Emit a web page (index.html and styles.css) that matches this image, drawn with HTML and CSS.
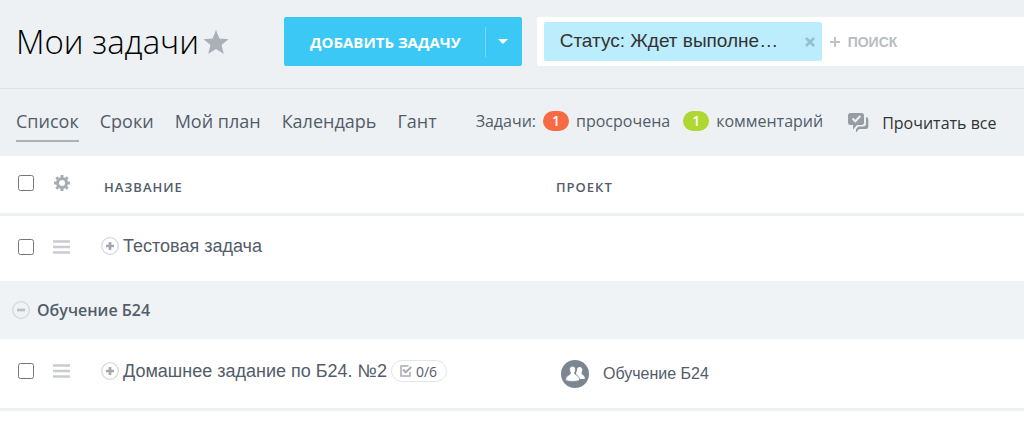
FILE: index.html
```html
<!DOCTYPE html>
<html lang="ru">
<head>
    <meta charset="UTF-8">
    <meta name="viewport" content="width=device-width, initial-scale=1.0">
    <title>Мои задачи</title>
    <link rel="stylesheet" href="styles.css">
</head>
<body>
    <header class="header">
        <div class="title">
            <h1>Мои задачи</h1>
            <button class="icon-btn" aria-label="В избранное">
                <svg width="26" height="24" viewBox="0 0 26 24"><path fill="#a9b0b8" d="M13 0l3.4 8.6 9.1.6-7 5.7 2.3 9.1L13 19l-7.800 5 2.300-9.100-7-5.700 9.100-.6z"/></svg>
            </button>
        </div>
        <div class="add">
            <button class="add-btn">ДОБАВИТЬ ЗАДАЧУ</button>
            <button class="add-more" aria-label="Ещё">
                <svg width="10" height="6" viewBox="0 0 10 6"><path fill="#fff" d="M0 0h10L5 5z"/></svg>
            </button>
        </div>
        <div class="search">
            <div class="filter">
                <span class="filter-text">Статус: Ждет выполне…</span>
                <button class="icon-btn" aria-label="Убрать фильтр">
                    <svg width="10" height="10" viewBox="0 0 10 10"><path stroke="#94c0cf" stroke-width="2.600" d="M1 1l8 8M9 1L1 9"/></svg>
                </button>
            </div>
            <svg class="plus" width="10" height="10" viewBox="0 0 10 10"><path stroke="#bfc3c7" stroke-width="2" d="M5 0v10M0 5h10"/></svg>
            <input class="search-input" type="text" placeholder="ПОИСК" aria-label="Поиск">
        </div>
    </header>

    <div class="toolbar">
        <nav class="tabs">
            <a class="tab active" href="#">Список</a>
            <a class="tab" href="#">Сроки</a>
            <a class="tab" href="#">Мой план</a>
            <a class="tab" href="#">Календарь</a>
            <a class="tab" href="#">Гант</a>
        </nav>
        <div class="counters">
            <span>Задачи:</span>
            <a class="counter" href="#"><span class="badge red">1</span>просрочена</a>
            <a class="counter green-counter" href="#"><span class="badge green">1</span>комментарий</a>
        </div>
        <button class="read-all">
            <svg width="21" height="20" viewBox="0 0 21 20">
                <path fill="#959ca4" d="M2.500 0h11Q16 0 16 2.500v7Q16 12 13.500 12H9l-4 4.500V12H2.500Q0 12 0 9.500v-7Q0 0 2.500 0z"/>
                <path fill="#959ca4" d="M18 4q2.300.3 2.300 2.500v7q0 2.500-2.500 2.500H11l-3 3.500V16l2.500-2.500H15q3 0 3-3z"/>
                <path fill="none" stroke="#edf1f4" stroke-width="2" d="M4.500 5.500l2.800 2.800 5-5.300"/>
            </svg>
            Прочитать все
        </button>
    </div>

    <table class="tasks">
        <thead>
            <tr>
                <th class="col-check"><input type="checkbox" aria-label="Выбрать все"></th>
                <th class="col-menu">
                    <button class="icon-btn" aria-label="Настройки">
                        <svg width="18" height="16" viewBox="0 0 18 16">
                            <circle cx="9" cy="8" r="4.500" fill="none" stroke="#a8adb4" stroke-width="3"/>
                            <path stroke="#a8adb4" stroke-width="3" d="M9 0v3M9 13v3M1 8h3M14 8h3M3.300 2.300l2.200 2.200M12.500 11.500l2.200 2.200M14.700 2.300l-2.200 2.200M5.500 11.500l-2.200 2.200"/>
                        </svg>
                    </button>
                </th>
                <th class="col-name">НАЗВАНИЕ</th>
                <th>ПРОЕКТ</th>
            </tr>
        </thead>
        <tbody>
            <tr class="task">
                <td class="col-check"><input type="checkbox" aria-label="Тестовая задача"></td>
                <td class="col-menu">
                    <button class="icon-btn" aria-label="Меню">
                        <svg width="18" height="14" viewBox="0 0 18 14"><path stroke="#c9ccd1" stroke-width="2.400" d="M0 1.500h17M0 7h17M0 12.500h17"/></svg>
                    </button>
                </td>
                <td>
                    <div class="name">
                        <button class="icon-btn" aria-label="Развернуть">
                            <svg width="18" height="18" viewBox="0 0 18 18"><circle cx="9" cy="9" r="8.300" fill="none" stroke="#d5d7da" stroke-width="1.300"/><path stroke="#a2a8af" stroke-width="2.700" d="M9 5v8M5 9h8"/></svg>
                        </button>
                        <a href="#">Тестовая задача</a>
                    </div>
                </td>
                <td></td>
            </tr>
            <tr class="group">
                <td colspan="4">
                    <div class="group-name">
                        <button class="icon-btn" aria-label="Свернуть">
                            <svg width="18" height="18" viewBox="0 0 18 18"><circle cx="9" cy="9" r="8.300" fill="none" stroke="#d3d7da" stroke-width="1.300"/><path stroke="#b9bfc4" stroke-width="2.700" d="M5 9h8"/></svg>
                        </button>
                        <span>Обучение Б24</span>
                    </div>
                </td>
            </tr>
            <tr class="task last">
                <td class="col-check"><input type="checkbox" aria-label="Домашнее задание по Б24. №2"></td>
                <td class="col-menu">
                    <button class="icon-btn" aria-label="Меню">
                        <svg width="18" height="14" viewBox="0 0 18 14"><path stroke="#c9ccd1" stroke-width="2.400" d="M0 1.500h17M0 7h17M0 12.500h17"/></svg>
                    </button>
                </td>
                <td>
                    <div class="name">
                        <button class="icon-btn" aria-label="Развернуть">
                            <svg width="18" height="18" viewBox="0 0 18 18"><circle cx="9" cy="9" r="8.300" fill="none" stroke="#d5d7da" stroke-width="1.300"/><path stroke="#a2a8af" stroke-width="2.700" d="M9 5v8M5 9h8"/></svg>
                        </button>
                        <a href="#">Домашнее задание по Б24. №2</a>
                        <span class="checklist">
                            <svg width="12" height="12" viewBox="0 0 12 12"><path fill="none" stroke="#a8adb4" stroke-width="1.500" d="M8.500 1H1v10h9V7"/><path fill="none" stroke="#a8adb4" stroke-width="2" d="M3 4.500l2.700 2.800L11.300 2"/></svg>
                            0/6
                        </span>
                    </div>
                </td>
                <td class="col-project">
                    <a class="project" href="#">
                        <svg width="28" height="28" viewBox="0 0 28 28">
                            <circle cx="14" cy="14" r="14" fill="#7b8691"/>
                            <path fill="#fff" d="M18.500 7c2 0 3 1.300 2.800 3.300-.1 1.500-.8 2.300-.8 3.200 0 1 3.500 1.500 3.300 5.500H16l-1-6 1-2.500C15.800 8.300 17 7 18.500 7z"/>
                            <path fill="#fff" stroke="#7b8691" stroke-width=".8" d="M11.500 6.200c2.300 0 3.300 1.600 3.100 3.600-.1 1.500-1 2.400-1 3.500 0 1.700 5.200 2 5 7.200-4 1.300-10 1.300-14 0-.2-5.200 4.900-5.500 4.900-7.200 0-1.100-.9-2-1-3.500-.2-2 .8-3.600 3-3.600z"/>
                        </svg>
                        Обучение Б24
                    </a>
                </td>
            </tr>
        </tbody>
    </table>
</body>
</html>
```
FILE: styles.css
```css
* {
    box-sizing: border-box;
}
body {
    margin: 0;
    background-color: #fff;
    font-family: "Open Sans", sans-serif;
    color: #535c69;
}
a {
    color: inherit;
    text-decoration: none;
}
button {
    border: none;
    background: none;
    padding: 0;
    font-family: inherit;
    color: inherit;
    cursor: pointer;
}
svg {
    display: block;
    flex-shrink: 0;
}
.icon-btn {
    display: block;
    flex-shrink: 0;
}
.header {
    display: flex;
    align-items: flex-start;
    padding: 17px 0 22px 16px;
    background-color: #edf1f4;
    border-bottom: 1px solid #dce1e5;
}
.title {
    display: flex;
    align-items: center;
    gap: 4px;
    width: 268px;
    height: 49px;
    flex-shrink: 0;
}
.title h1 {
    margin: 0;
    font-size: 33px;
    font-weight: 300;
    color: #000;
    white-space: nowrap;
}
.add {
    display: flex;
    align-items: center;
    flex-shrink: 0;
    height: 49px;
    margin-right: 15px;
    background-color: #3bc8f5;
    border-radius: 2px;
}
.add-btn {
    padding: 0 24px 0 26px;
    font-size: 15px;
    font-weight: 700;
    color: #fff;
}
.add-more {
    display: flex;
    align-items: center;
    height: 30px;
    padding: 0 14px 0 12px;
    border-left: 1px solid #76d9f8;
}
.search {
    display: flex;
    align-items: center;
    flex: 1;
    min-width: 0;
    height: 49px;
    padding-left: 7px;
    background-color: #fff;
    border-radius: 2px 0 0 2px;
    font-family: "Liberation Sans", Arial, sans-serif;
}
.filter {
    display: flex;
    align-items: center;
    justify-content: space-between;
    width: 278px;
    height: 39px;
    padding: 0 7px 0 16px;
    background-color: #bbedfc;
    border-radius: 2px;
}
.filter-text {
    padding-bottom: 2px;
    font-size: 19px;
    color: #333;
    white-space: nowrap;
}
.plus {
    margin: 0 8px;
}
.search-input {
    flex: 1;
    min-width: 0;
    padding: 0;
    border: none;
    outline: none;
    font-family: inherit;
    font-size: 14px;
    font-weight: 700;
}
.search-input::placeholder {
    color: #b8bcc0;
}
.toolbar {
    display: flex;
    align-items: center;
    height: 67px;
    padding: 0 16px;
    background-color: #edf1f4;
    white-space: nowrap;
}
.tabs {
    display: flex;
    gap: 21px;
    margin-right: 39px;
    font-size: 18px;
}
.tab {
    height: 38px;
    padding-top: 5px;
    line-height: 24px;
}
.tab.active {
    border-bottom: 2px solid #a9b1b9;
}
.counters {
    display: flex;
    align-items: center;
    gap: 7px;
    padding-bottom: 3px;
    font-size: 16px;
}
.counter {
    display: flex;
    align-items: center;
    gap: 7px;
}
.green-counter {
    margin-left: 6px;
}
.badge {
    width: 26px;
    border-radius: 10px;
    font-size: 14px;
    font-weight: 600;
    line-height: 20px;
    text-align: center;
    color: #fff;
}
.red {
    background-color: #f66b43;
}
.green {
    background-color: #aed731;
}
.read-all {
    display: flex;
    align-items: center;
    gap: 13px;
    margin-left: 25px;
    font-size: 16px;
    color: #333;
}
.tasks {
    width: 100%;
    border-spacing: 0;
    table-layout: fixed;
}
.tasks th {
    height: 60px;
    padding: 4px 0 0 4px;
    border-bottom: 3px solid #edf1f4;
    font-size: 13px;
    font-weight: 600;
    letter-spacing: 1px;
    text-align: left;
}
.tasks td {
    height: 65px;
    padding: 0 0 5px;
}
.tasks .col-check {
    width: 53px;
    padding: 0 0 3px 18px;
}
.tasks .col-menu {
    width: 47px;
    padding: 0 0 3px;
}
.tasks .col-name {
    width: 452px;
    padding-left: 4px;
}
.tasks input {
    display: block;
    width: 16px;
    height: 16px;
    margin: 0;
}
.name {
    display: flex;
    align-items: center;
    gap: 4px;
    padding-left: 1px;
    font-family: "Liberation Sans", Arial, sans-serif;
    font-size: 18px;
    white-space: nowrap;
}
.tasks .group td {
    height: 58px;
    padding-bottom: 1px;
    background-color: #eff3f6;
}
.group-name {
    display: flex;
    align-items: center;
    gap: 7px;
    padding-left: 12px;
    font-size: 16px;
    font-weight: 600;
}
.tasks .last td {
    height: 72px;
    padding-bottom: 5px;
    border-bottom: 3px solid #edf1f4;
}
.tasks .last .col-project {
    padding-bottom: 0;
}
.checklist {
    display: flex;
    align-items: center;
    gap: 4px;
    height: 22px;
    padding: 0 9px 0 8px;
    border: 1px solid #e3e6e9;
    border-radius: 11px;
    font-family: "Open Sans", sans-serif;
    font-size: 14px;
}
.project {
    display: flex;
    align-items: center;
    gap: 14px;
    padding-left: 9px;
    font-family: "Liberation Sans", Arial, sans-serif;
    font-size: 16px;
}
```
